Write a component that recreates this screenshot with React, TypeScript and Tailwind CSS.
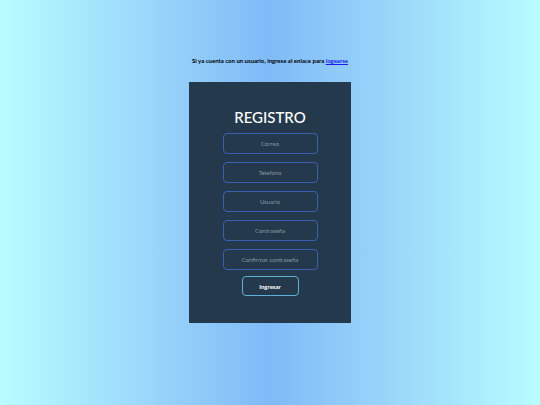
export default function App() {
  const fields = ["Correo", "Telefono", "Usuario", "Contraseña", "Confirmar contraseña"];

  return (
    <div
      className="min-h-[405px] w-full flex flex-col items-center bg-[linear-gradient(to_right,#b8fdff_0%,#97d3f9_30%,#80baf8_50%,#97d3f9_70%,#b8fdff_100%)]"
      style={{ fontFamily: "Lato, 'Open Sans', sans-serif" }}
    >
      <p className="mt-[57px] text-[6px] font-bold text-black leading-[8px]">
        Si ya cuenta con un usuario, ingrese al enlace para{" "}
        <a href="#" className="text-[#1a1aee] underline">
          logearse
        </a>
      </p>

      <div className="mt-[17px] w-[162px] h-[241px] bg-[#243a4c] flex flex-col items-center">
        <h1 className="mt-[26px] text-[15px] leading-[18px] font-medium text-white">
          REGISTRO
        </h1>

        <div className="mt-[7px] flex flex-col gap-[8px]">
          {fields.map((f) => (
            <input
              key={f}
              placeholder={f}
              className="w-[95px] h-[21px] rounded-[4px] border-[1.5px] border-[#3a60b4] bg-transparent text-center text-[6px] text-white placeholder:text-[#8a95a2] outline-none"
            />
          ))}
        </div>

        <button className="mt-[6px] w-[57px] h-[20px] rounded-[4px] border-[1.5px] border-[#5fb0d6] text-white text-[6px] font-bold">
          Ingresar
        </button>
      </div>
    </div>
  );
}
